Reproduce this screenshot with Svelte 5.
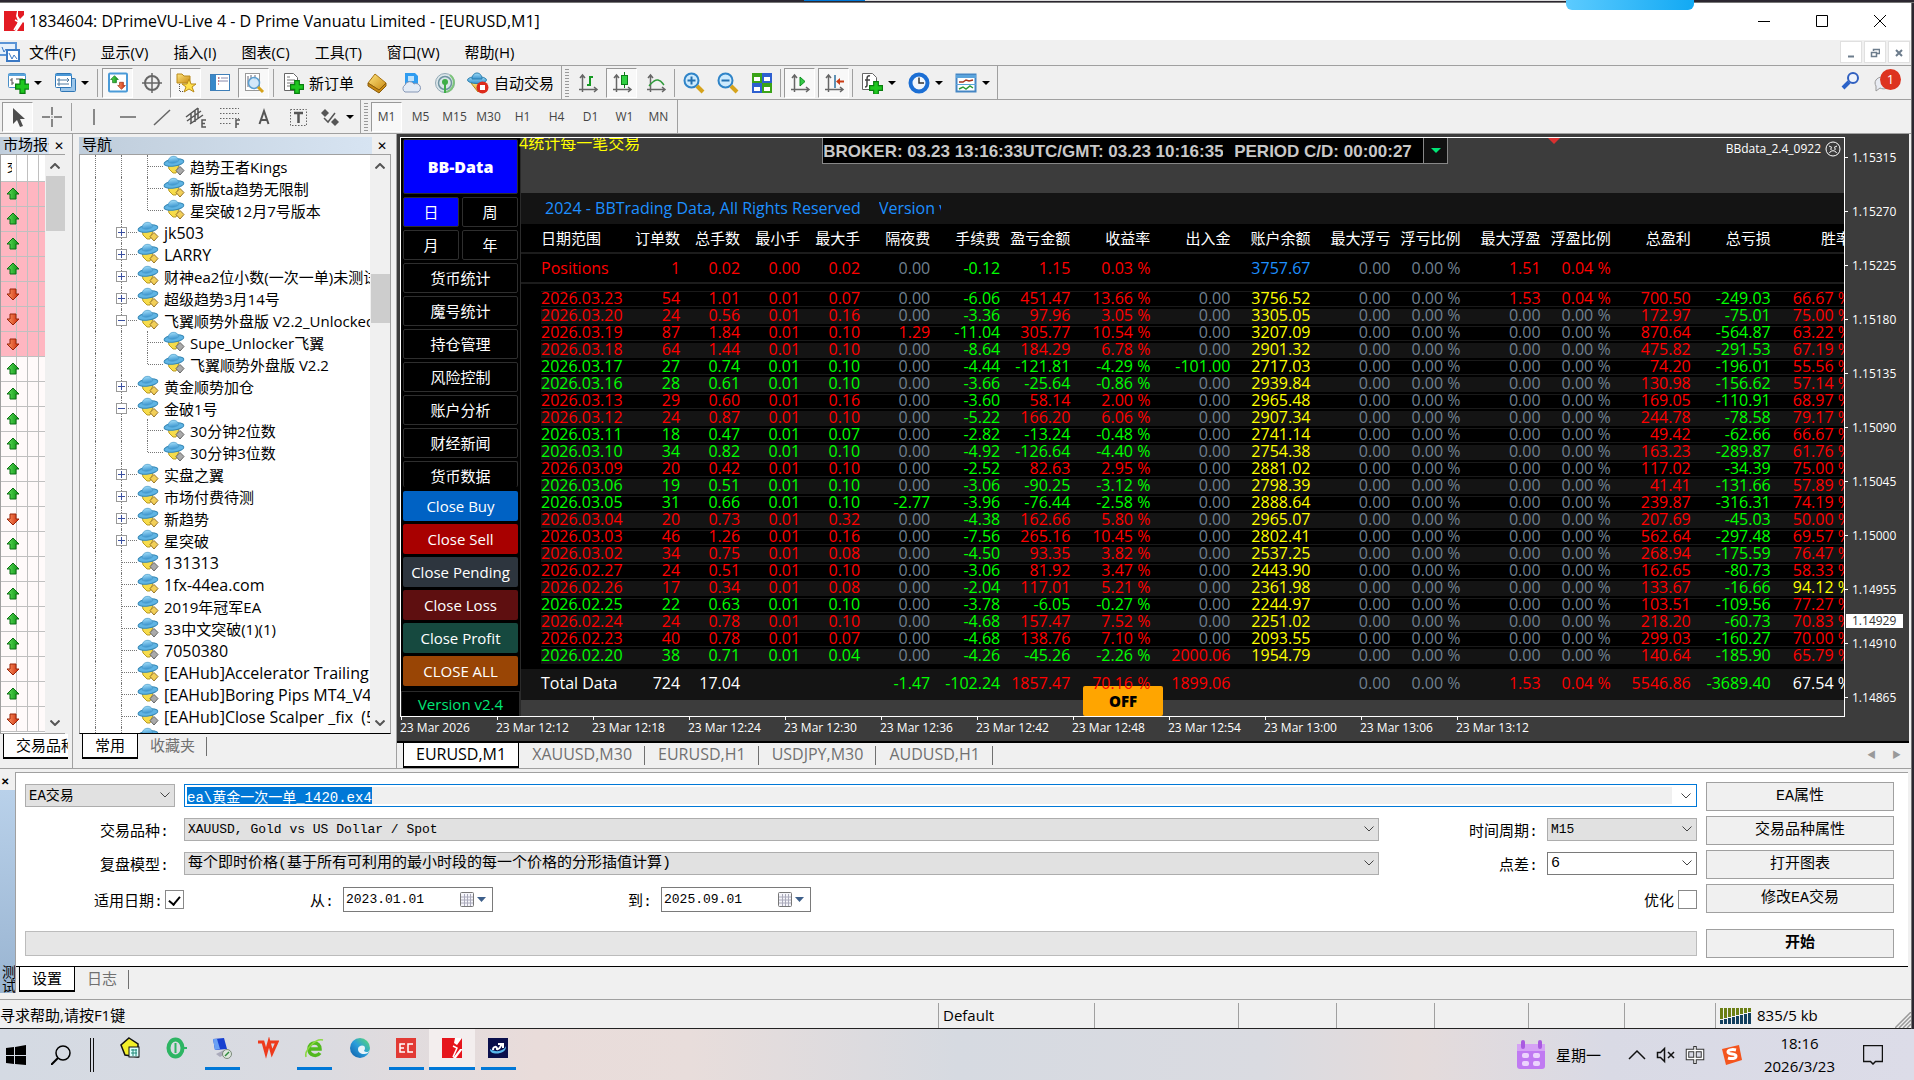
<script>
  import { onMount } from "svelte";

  const menu = ["文件(F)", "显示(V)", "插入(I)", "图表(C)", "工具(T)", "窗口(W)", "帮助(H)"];

  // first toolbar, "|" is a separator
  const tools = [
    { icon: "newchart", drop: true, label: "新图表" },
    { icon: "profiles", drop: true, label: "配置文件" },
    "|",
    { icon: "watch", on: true, label: "市场报价" },
    { icon: "target", label: "数据窗口" },
    { icon: "folder", on: true, label: "导航" },
    { icon: "terminal", label: "终端" },
    { icon: "tester", on: true, label: "测试" },
    "|",
    { icon: "order", text: "新订单" },
    { icon: "book", label: "编辑器" },
    { icon: "cloud", label: "VPS" },
    { icon: "signal", label: "信号" },
    { icon: "auto", text: "自动交易" }
  ];
  const chartTools = [
    { icon: "bars", label: "柱状图" },
    { icon: "candle", on: true, label: "蜡烛图" },
    { icon: "line", label: "折线图" },
    "|",
    { icon: "zoomin", label: "放大" },
    { icon: "zoomout", label: "缩小" },
    { icon: "tile", label: "平铺窗口" },
    "|",
    { icon: "scroll", on: true, label: "自动滚动" },
    { icon: "shift", on: true, label: "图表平移" },
    "|",
    { icon: "indicator", drop: true, label: "技术指标" },
    { icon: "clock", drop: true, label: "周期" },
    { icon: "template", drop: true, label: "模板" }
  ];
  const drawTools = [
    { icon: "cursor", on: true, label: "光标" },
    { icon: "cross", label: "十字准线" },
    "|",
    { icon: "vline", label: "垂直线" },
    { icon: "hline", label: "水平线" },
    { icon: "trend", label: "趋势线" },
    { icon: "channel", label: "通道" },
    { icon: "fibo", label: "斐波那契" },
    { icon: "texta", label: "文字" },
    { icon: "textt", label: "文字标签" },
    { icon: "arrows", drop: true, label: "箭头" }
  ];
  const periods = ["M1", "M5", "M15", "M30", "H1", "H4", "D1", "W1", "MN"];

  const quotes = "UUUUDDDUUUUUUDUUUUUDUD".split("");

  // box: + / - expander, off: grey diamond, last: last child of its parent
  const tree = [
    { lvl: 2, name: "趋势王者Kings", off: true },
    { lvl: 2, name: "新版ta趋势无限制" },
    { lvl: 2, name: "星突破12月7号版本", last: true },
    { lvl: 1, name: "jk503", box: "+" },
    { lvl: 1, name: "LARRY", box: "+" },
    { lvl: 1, name: "财神ea2位小数(一次一单)未测试", box: "+" },
    { lvl: 1, name: "超级趋势3月14号", box: "+" },
    { lvl: 1, name: "飞翼顺势外盘版 V2.2_Unlocked", box: "-" },
    { lvl: 2, name: "Supe_Unlocker飞翼", off: true },
    { lvl: 2, name: "飞翼顺势外盘版 V2.2", off: true, last: true },
    { lvl: 1, name: "黄金顺势加仓", box: "+" },
    { lvl: 1, name: "金破1号", box: "-" },
    { lvl: 2, name: "30分钟2位数", off: true },
    { lvl: 2, name: "30分钟3位数", off: true, last: true },
    { lvl: 1, name: "实盘之翼", box: "+" },
    { lvl: 1, name: "市场付费待测", box: "+" },
    { lvl: 1, name: "新趋势", box: "+" },
    { lvl: 1, name: "星突破", box: "+" },
    { lvl: 1, name: "131313", off: true },
    { lvl: 1, name: "1fx-44ea.com" },
    { lvl: 1, name: "2019年冠军EA" },
    { lvl: 1, name: "33中文突破(1)(1)", off: true },
    { lvl: 1, name: "7050380", off: true },
    { lvl: 1, name: "[EAHub]Accelerator Trailing" },
    { lvl: 1, name: "[EAHub]Boring Pips MT4_V4", off: true },
    { lvl: 1, name: "[EAHub]Close Scalper _fix  (5", off: true },
    { lvl: 1, name: "[EAHub]", off: true }
  ];
  const isLatin = (s) => /^[ -~]+$/.test(s);

  const pages = ["货币统计", "魔号统计", "持仓管理", "风险控制", "账户分析", "财经新闻", "货币数据"];
  const closers = [
    { name: "Close Buy", cls: "buy" },
    { name: "Close Sell", cls: "sell" },
    { name: "Close Pending", cls: "pending" },
    { name: "Close Loss", cls: "loss" },
    { name: "Close Profit", cls: "profit" },
    { name: "CLOSE ALL", cls: "all" }
  ];

  const widths = [79, 60, 60, 60, 60, 70, 70, 70, 80, 80, 80, 80, 70, 80, 70, 80, 80, 80];
  const heads = ["日期范围", "订单数", "总手数", "最小手", "最大手", "隔夜费", "手续费", "盈亏金额", "收益率", "出入金", "账户余额", "最大浮亏", "浮亏比例", "最大浮盈", "浮盈比例", "总盈利", "总亏损", "胜率"];

  // date, orders, lots, max lot, swap, commission, profit, rate, deposit, balance, gain, loss, win rate
  const days = [
    ["2026.03.23", "54", "1.01", "0.07", "0.00", "-6.06", "451.47", "13.66", "0.00", "3756.52", "700.50", "-249.03", "66.67"],
    ["2026.03.20", "24", "0.56", "0.16", "0.00", "-3.36", "97.96", "3.05", "0.00", "3305.05", "172.97", "-75.01", "75.00"],
    ["2026.03.19", "87", "1.84", "0.10", "1.29", "-11.04", "305.77", "10.54", "0.00", "3207.09", "870.64", "-564.87", "63.22"],
    ["2026.03.18", "64", "1.44", "0.10", "0.00", "-8.64", "184.29", "6.78", "0.00", "2901.32", "475.82", "-291.53", "67.19"],
    ["2026.03.17", "27", "0.74", "0.10", "0.00", "-4.44", "-121.81", "-4.29", "-101.00", "2717.03", "74.20", "-196.01", "55.56"],
    ["2026.03.16", "28", "0.61", "0.10", "0.00", "-3.66", "-25.64", "-0.86", "0.00", "2939.84", "130.98", "-156.62", "57.14"],
    ["2026.03.13", "29", "0.60", "0.16", "0.00", "-3.60", "58.14", "2.00", "0.00", "2965.48", "169.05", "-110.91", "68.97"],
    ["2026.03.12", "24", "0.87", "0.10", "0.00", "-5.22", "166.20", "6.06", "0.00", "2907.34", "244.78", "-78.58", "79.17"],
    ["2026.03.11", "18", "0.47", "0.07", "0.00", "-2.82", "-13.24", "-0.48", "0.00", "2741.14", "49.42", "-62.66", "66.67"],
    ["2026.03.10", "34", "0.82", "0.10", "0.00", "-4.92", "-126.64", "-4.40", "0.00", "2754.38", "163.23", "-289.87", "61.76"],
    ["2026.03.09", "20", "0.42", "0.10", "0.00", "-2.52", "82.63", "2.95", "0.00", "2881.02", "117.02", "-34.39", "75.00"],
    ["2026.03.06", "19", "0.51", "0.10", "0.00", "-3.06", "-90.25", "-3.12", "0.00", "2798.39", "41.41", "-131.66", "57.89"],
    ["2026.03.05", "31", "0.66", "0.10", "-2.77", "-3.96", "-76.44", "-2.58", "0.00", "2888.64", "239.87", "-316.31", "74.19"],
    ["2026.03.04", "20", "0.73", "0.32", "0.00", "-4.38", "162.66", "5.80", "0.00", "2965.07", "207.69", "-45.03", "50.00"],
    ["2026.03.03", "46", "1.26", "0.16", "0.00", "-7.56", "265.16", "10.45", "0.00", "2802.41", "562.64", "-297.48", "69.57"],
    ["2026.03.02", "34", "0.75", "0.08", "0.00", "-4.50", "93.35", "3.82", "0.00", "2537.25", "268.94", "-175.59", "76.47"],
    ["2026.02.27", "24", "0.51", "0.10", "0.00", "-3.06", "81.92", "3.47", "0.00", "2443.90", "162.65", "-80.73", "58.33"],
    ["2026.02.26", "17", "0.34", "0.08", "0.00", "-2.04", "117.01", "5.21", "0.00", "2361.98", "133.67", "-16.66", "94.12"],
    ["2026.02.25", "22", "0.63", "0.10", "0.00", "-3.78", "-6.05", "-0.27", "0.00", "2244.97", "103.51", "-109.56", "77.27"],
    ["2026.02.24", "24", "0.78", "0.10", "0.00", "-4.68", "157.47", "7.52", "0.00", "2251.02", "218.20", "-60.73", "70.83"],
    ["2026.02.23", "40", "0.78", "0.07", "0.00", "-4.68", "138.76", "7.10", "0.00", "2093.55", "299.03", "-160.27", "70.00"],
    ["2026.02.20", "38", "0.71", "0.04", "0.00", "-4.26", "-45.26", "-2.26", "2000.06", "1954.79", "140.64", "-185.90", "65.79"]
  ];

  const positions = ["Positions", "1", "0.02", "0.00", "0.02", "0.00", "-0.12", "1.15", "0.03 %", "", "3757.67", "0.00", "0.00 %", "1.51", "0.04 %", "", "", ""];
  const totals = ["Total Data", "724", "17.04", "", "", "-1.47", "-102.24", "1857.47", "70.16 %", "1899.06", "", "0.00", "0.00 %", "1.53", "0.04 %", "5546.86", "-3689.40", "67.54 %"];

  function expand(d, i) {
    const up = i === 0;
    return [d[0], d[1], d[2], "0.01", d[3], d[4], d[5], d[6], d[7] + " %", d[8], d[9], "0.00", "0.00 %", up ? "1.53" : "0.00", up ? "0.04 %" : "0.00 %", d[10], d[11], d[12] + " %"];
  }

  function tone(v) {
    const n = parseFloat(v);
    return n > 0 ? "red" : n < 0 ? "lime" : "grey";
  }

  function dayTone(row, c) {
    if (c < 5) return tone(row[7]);
    if (c === 10) return "yellow";
    if (c === 17) return parseFloat(row[c]) > 90 ? "yellow" : "red";
    return tone(row[c]);
  }

  const prices = ["1.15315", "1.15270", "1.15225", "1.15180", "1.15135", "1.15090", "1.15045", "1.15000", "1.14955", "1.14910", "1.14865"];
  const times = ["23 Mar 2026", "23 Mar 12:12", "23 Mar 12:18", "23 Mar 12:24", "23 Mar 12:30", "23 Mar 12:36", "23 Mar 12:42", "23 Mar 12:48", "23 Mar 12:54", "23 Mar 13:00", "23 Mar 13:06", "23 Mar 13:12"];
  const charts = ["EURUSD,M1", "XAUUSD,M30", "EURUSD,H1", "USDJPY,M30", "AUDUSD,H1"];

  const apps = [
    { icon: "a-note", label: "便签" },
    { icon: "a-green", label: "浏览器" },
    { icon: "a-remote", label: "远程桌面", run: true },
    { icon: "a-wps", label: "WPS" },
    { icon: "a-ie", label: "360", run: true },
    { icon: "a-edge", label: "Edge" },
    { icon: "a-ec", label: "EC", run: true },
    { icon: "a-prime", label: "D Prime", run: true, active: true },
    { icon: "a-navy", label: "MT4", run: true }
  ];

  let expert = "ea\\黄金一次一单_1420.ex4";
  let expertInput;

  onMount(() => {
    expertInput.focus({ preventScroll: true });
    expertInput.select();
  });
</script>

{#snippet ico(name)}
  <svg class="ico" viewBox="0 0 22 22" aria-hidden="true"><use href="#{name}" /></svg>
{/snippet}

{#snippet toolrow(items)}
  {#each items as t}
    {#if t === "|"}
      <span class="sep"></span>
    {:else}
      <button class="tool" class:on={t.on} class:drop={t.drop} class:wide={t.text} aria-label={t.label ?? t.text}>
        {@render ico(t.icon)}
        {#if t.text}<span>{t.text}</span>{/if}
        {#if t.drop}<i class="tri"></i>{/if}
      </button>
    {/if}
  {/each}
{/snippet}

{#snippet chev()}
  <svg class="chev" viewBox="0 0 10 6" aria-hidden="true"><path d="M.5.5 5 5 9.5.5" fill="none" stroke="#444" /></svg>
{/snippet}

{#snippet scrollbar(cls)}
  <div class="scrollbar {cls}">
    <svg viewBox="0 0 10 6"><path d="M.5 5.5 5 1l4.5 4.5" fill="none" stroke="#555" stroke-width="2" /></svg>
    <div class="thumb"></div>
    <svg viewBox="0 0 10 6"><path d="M.5.5 5 5 9.5.5" fill="none" stroke="#555" stroke-width="2" /></svg>
  </div>
{/snippet}

<svg class="defs" aria-hidden="true">
  <defs>
    <linearGradient id="gGreen" x1="0" x2="1"><stop offset="0" stop-color="#5fe05a" /><stop offset="1" stop-color="#0b8f14" /></linearGradient>
    <linearGradient id="gRed" x1="0" x2="1"><stop offset="0" stop-color="#ff9a66" /><stop offset="1" stop-color="#c92a0a" /></linearGradient>
    <linearGradient id="gBlue" x1="0" x2="0" y1="0" y2="1"><stop offset="0" stop-color="#9fdcf8" /><stop offset="1" stop-color="#3a94cf" /></linearGradient>
    <linearGradient id="gGold" x1="0" x2="1" y1="0" y2="1"><stop offset="0" stop-color="#ffe680" /><stop offset="1" stop-color="#c98a12" /></linearGradient>
    <linearGradient id="gEdge" x1="0" x2="1" y1="1" y2="0"><stop offset="0" stop-color="#0c59a4" /><stop offset=".5" stop-color="#2a9ddb" /><stop offset="1" stop-color="#5fe06a" /></linearGradient>
  </defs>
  <symbol id="plus" viewBox="0 0 12 12"><path d="M4 .5h4V4h3.5v4H8v3.5H4V8H.5V4H4z" fill="#1fc71f" stroke="#0a7d10" /></symbol>
  <symbol id="up" viewBox="0 0 14 14"><path d="M7 1l6 6H10v5H4V7H1z" fill="url(#gGreen)" stroke="#0d6e14" /></symbol>
  <symbol id="down" viewBox="0 0 14 14"><path d="M7 13l6-6H10V2H4v5H1z" fill="url(#gRed)" stroke="#9a2408" /></symbol>
  <symbol id="newchart" viewBox="0 0 22 22"><rect x="1.5" y="1.5" width="17" height="14" rx="1" fill="#fff" stroke="#4b8fc7" /><path d="M1 2h18v2H1z" fill="#5ba4dc" /><path d="M5 6v7M3 8h2m0 3h2M9 7h7" stroke="#555" /><use href="#plus" x="8" y="7" width="15" height="15" /></symbol>
  <symbol id="profiles" viewBox="0 0 22 22"><rect x="6.5" y="6.5" width="15" height="13" rx="1" fill="#9cc6ea" stroke="#2f76b5" /><rect x="1.5" y="1.5" width="16" height="14" rx="1" fill="#fff" stroke="#2f76b5" /><path d="M1 2h17v2H1z" fill="#4b98d6" /><path d="M5 6v8M3 8h12M3 12h12M13 6l2 2-2 2" fill="none" stroke="#4f7ba0" /></symbol>
  <symbol id="watch" viewBox="0 0 22 22"><rect x="2" y="1.5" width="18" height="18" rx="1" fill="#fff" stroke="#4b9bd8" stroke-width="2" /><use href="#up" x="3" y="3" width="9" height="9" /><use href="#down" x="10" y="9" width="9" height="9" /></symbol>
  <symbol id="target" viewBox="0 0 22 22"><circle cx="11" cy="11" r="7" fill="none" stroke="#666" stroke-width="2" /><path d="M11 1v20M1 11h20" stroke="#666" stroke-width="1.5" /></symbol>
  <symbol id="folder" viewBox="0 0 22 22"><path d="M2 2h5l2 2h6v7H2z" fill="url(#gGold)" stroke="#b98a1a" /><path d="M4.5 12v7M5 19.5h6" stroke="#555" stroke-dasharray="1 1" /><path d="M14 7l2 5h5l-4 3 2 5-5-3-5 3 2-5-4-3h5z" fill="#ffe04a" stroke="#b98a1a" /></symbol>
  <symbol id="terminal" viewBox="0 0 22 22"><rect x="1.5" y="2.5" width="19" height="16" fill="#fff" stroke="#3f7fb8" /><rect x="2" y="3" width="5" height="15" fill="#3a88c8" /><path d="M9 6h2m1 0h7M9 9h10" stroke="#88a" /><path d="M9 6h1m-1 3h1m-1 3h1" stroke="#c33" /></symbol>
  <symbol id="tester" viewBox="0 0 22 22"><rect x="2.5" y="1.5" width="14" height="17" fill="#fff" stroke="#999" /><path d="M5 4v11m3-12v5m4-5v5" stroke="#667" /><circle cx="11" cy="11" r="5.5" fill="#cfe6f8" fill-opacity=".9" stroke="#5c9fd0" stroke-width="1.5" /><path d="M15 15l5 5" stroke="#d6a31c" stroke-width="3" /></symbol>
  <symbol id="order" viewBox="0 0 22 22"><path d="M2.5 1.5h9l4 4v13h-13z" fill="#fff" stroke="#666" /><path d="M5 5h3M5 8h8M5 11h7M5 14h4" stroke="#777" /><use href="#plus" x="8" y="8" width="14" height="14" /></symbol>
  <symbol id="book" viewBox="0 0 22 22"><path d="M9 2l11 9-7 7L2 11z" fill="url(#gGold)" stroke="#a97413" /><path d="M2 11v3l11 7 7-7v-3l-7 7z" fill="#c98a12" stroke="#8a5c0c" /></symbol>
  <symbol id="cloud" viewBox="0 0 22 22"><path d="M5 1h10l3 3v9H5z" fill="#2f9cf0" /><path d="M8 4h6v5H8z" fill="#bfe2fb" /><path d="M5 20a4 4 0 010-7 5 5 0 019-1 4 4 0 014 8z" fill="#e4ebf5" stroke="#8596b5" /></symbol>
  <symbol id="signal" viewBox="0 0 22 22"><circle cx="11" cy="11" r="9.5" fill="#dbe6ea" stroke="#93a9b5" /><circle cx="11" cy="11" r="6.5" fill="none" stroke="#6f93a0" stroke-width="1.5" /><path d="M11 20a9.5 9.5 0 005-17" fill="none" stroke="#7cc47a" stroke-width="2" /><circle cx="11" cy="10" r="3" fill="#3fae49" /><path d="M11 11v10" stroke="#3fae49" stroke-width="2" /></symbol>
  <symbol id="auto" viewBox="0 0 22 22"><path d="M4 11l7 9 8-9z" fill="url(#gGold)" stroke="#b98a1a" /><ellipse cx="10" cy="8" rx="9.5" ry="3.5" fill="url(#gBlue)" stroke="#2c7fae" /><path d="M5 7c0-8 10-8 10 0z" fill="url(#gBlue)" stroke="#2c7fae" /><circle cx="15.5" cy="15.5" r="6" fill="#dd2b1c" /><rect x="13" y="13" width="5" height="5" fill="#fff" /></symbol>
  <symbol id="axes" viewBox="0 0 22 22"><path d="M5.5 3v17M2 17.5h18M3 6l2.5-3L8 6M17 15l3 2.5-3 2.5" fill="none" stroke="#666" stroke-width="1.5" /></symbol>
  <symbol id="bars" viewBox="0 0 22 22"><use href="#axes" /><path d="M13 4v10M13 5h3M10 13h3" stroke="#159a22" stroke-width="2" /></symbol>
  <symbol id="candle" viewBox="0 0 22 22"><use href="#axes" /><path d="M13.5 0v16" stroke="#0b7d18" /><rect x="10.5" y="3.5" width="6" height="9" fill="#2fd040" stroke="#0b7d18" /></symbol>
  <symbol id="line" viewBox="0 0 22 22"><use href="#axes" /><path d="M4 14c3-3 5-7 9-6s4 3 6 5" fill="none" stroke="#2f9a3a" stroke-width="1.5" /></symbol>
  <symbol id="lens" viewBox="0 0 22 22"><circle cx="8.5" cy="8.5" r="7" fill="#cdeafd" stroke="#2f84c8" stroke-width="2" /><path d="M14 14l6 6" stroke="#d6a31c" stroke-width="4" /></symbol>
  <symbol id="zoomin" viewBox="0 0 22 22"><use href="#lens" /><path d="M8.5 4.5v8M4.5 8.5h8" stroke="#2470b0" stroke-width="2" /></symbol>
  <symbol id="zoomout" viewBox="0 0 22 22"><use href="#lens" /><path d="M4.5 8.5h8" stroke="#2470b0" stroke-width="2" /></symbol>
  <symbol id="tile" viewBox="0 0 22 22"><path d="M1 1h10v10H1zM11 11h10v10H11z" fill="#3aa318" /><path d="M11 1h10v10H11zM1 11h10v10H1z" fill="#2d5fd0" /><path d="M3 5h6v4H3zM13 5h6v4h-6zM3 15h6v4H3zM13 15h6v4h-6z" fill="#fff" /></symbol>
  <symbol id="scroll" viewBox="0 0 22 22"><use href="#axes" /><path d="M11 5v9l5-4.5z" fill="#35c948" stroke="#0b8f1c" /></symbol>
  <symbol id="shift" viewBox="0 0 22 22"><use href="#axes" /><path d="M12 3v13" stroke="#2c6f9e" stroke-width="1.5" /><path d="M13 9.5l4-3.5v2.5h4v2h-4V13z" fill="#c93b14" /></symbol>
  <symbol id="indicator" viewBox="0 0 22 22"><path d="M1.5 1.5h10l4 4v12h-14z" fill="#fff" stroke="#666" /><path d="M9 4c-3-1-3 2-3 4v5c0 2-1 2-2 2M4 8h5" fill="none" stroke="#444" stroke-width="1.5" /><use href="#plus" x="8" y="9" width="14" height="14" /></symbol>
  <symbol id="clock" viewBox="0 0 22 22"><circle cx="11" cy="11" r="8.5" fill="#f3f8fd" stroke="#1c6fd4" stroke-width="4" /><path d="M11 5.5V11h5" fill="none" stroke="#333" stroke-width="1.5" /></symbol>
  <symbol id="template" viewBox="0 0 22 22"><rect x="1.5" y="2.5" width="19" height="17" fill="#fff" stroke="#4586c4" stroke-width="2" /><path d="M1 3h20v3H1zM1 12h20v1H1z" fill="#5ba4dc" /><path d="M4 10h4l3-2 3 1 4-1" fill="none" stroke="#a8331c" stroke-width="1.5" /><path d="M4 17l4-2 3 2 4-3 3 2" fill="none" stroke="#2f9a3a" stroke-width="1.5" /></symbol>
  <symbol id="cursor" viewBox="0 0 22 22"><path d="M6 2v16l4-4 3 7 3-1-3-7h5z" fill="#4d4d4d" /></symbol>
  <symbol id="cross" viewBox="0 0 22 22"><path d="M11 1v8m0 4v8M1 11h8m4 0h8M10.5 11h1" stroke="#666" stroke-width="1.5" /></symbol>
  <symbol id="vline" viewBox="0 0 22 22"><path d="M11 3v16" stroke="#666" stroke-width="1.5" /></symbol>
  <symbol id="hline" viewBox="0 0 22 22"><path d="M3 11h16" stroke="#666" stroke-width="1.5" /></symbol>
  <symbol id="trend" viewBox="0 0 22 22"><path d="M3 19L19 4" stroke="#666" stroke-width="1.5" /></symbol>
  <symbol id="channel" viewBox="0 0 22 22"><path d="M1 11L13 2M2 15L16 5M5 18L18 9M6 7v10M10 4v12M13 2v10" stroke="#555" stroke-width="1.5" /><path d="M21 14h-4v7h4m-4-3.5h3" fill="none" stroke="#555" stroke-width="1.5" /></symbol>
  <symbol id="fibo" viewBox="0 0 22 22"><path d="M1 2.5h19M1 7.5h19M1 12.5h19M1 17.5h12" stroke="#666" stroke-dasharray="1.5 1.5" /><path d="M21 14h-4v8m0-4h3" fill="none" stroke="#555" stroke-width="1.5" /></symbol>
  <symbol id="texta" viewBox="0 0 22 22"><path d="M6.5 18L11 5l4.5 13M8 14h6" fill="none" stroke="#555" stroke-width="2" /></symbol>
  <symbol id="textt" viewBox="0 0 22 22"><rect x="3.5" y="3.5" width="16" height="16" fill="none" stroke="#666" stroke-dasharray="1.5 1.5" /><path d="M7 7h9M11.5 7v10" stroke="#555" stroke-width="2.5" /></symbol>
  <symbol id="arrows" viewBox="0 0 22 22"><path d="M6 3l4 4-4 4-4-4zM16 12l4 4-4 4-4-4z" fill="#555" /><path d="M5 12l4 4 7-9" fill="none" stroke="#555" stroke-width="1.5" /></symbol>
  <symbol id="ea" viewBox="0 0 22 22">
    <path d="M5 9l1 5 4 4h3l3-8z" fill="#f7dc4a" stroke="#b99a25" />
    <g transform="rotate(-8 11 8)">
      <ellipse cx="11" cy="7.5" rx="10" ry="3.5" fill="#5fb4e4" stroke="#3486b5" />
      <path d="M5.5 6.5c0-7 10.5-7 10.5 0-3 2-7.5 2-10.5 0z" fill="url(#gBlue)" stroke="#4b9bc9" stroke-width=".7" />
    </g>
  </symbol>
  <symbol id="gold" viewBox="0 0 22 22"><path d="M17 11.5l4 4-4 4.5-4-4.5z" fill="#f2cf58" stroke="#98752a" /></symbol>
  <symbol id="dull" viewBox="0 0 22 22"><path d="M17 11.5l4 4-4 4.5-4-4.5z" fill="#aaa" stroke="#666" /></symbol>
  <symbol id="prime" viewBox="0 0 22 22"><path d="M1 1h13l-1 5 2 5-3 10H1z" fill="#e31b23" /><path d="M15 1h6v4l-4 4-2-3zM14 21l6-9 1 1v8z" fill="#e31b23" /><path d="M12 10l4 2-5 8" fill="none" stroke="#fff" stroke-width="1.5" /></symbol>
  <symbol id="a-note" viewBox="0 0 22 22"><path d="M10 1l9 6v13l-13-2-4-10z" fill="#f2ef28" stroke="#111" stroke-width="1.5" /><rect x="10" y="10" width="10" height="10" fill="#dff" stroke="#111" /><path d="M12 13h6M12 16h6M14 12v7M17 12v7" stroke="#287" /></symbol>
  <symbol id="a-green" viewBox="0 0 22 22"><ellipse cx="10.5" cy="11" rx="7" ry="8.5" fill="none" stroke="#2db563" stroke-width="4" /><path d="M10.5 6v10M17 11h5" stroke="#2db563" stroke-width="2" /></symbol>
  <symbol id="a-remote" viewBox="0 0 22 22"><path d="M2 2l11-1 3 11-12 1z" fill="#1740d0" /><path d="M2 2l4 0 3 10-5 1z" fill="#6aa0f4" /><path d="M5 17l8-4 3 3-7 4z" fill="#aab" /><circle cx="16" cy="17" r="4.5" fill="#dde6dd" stroke="#7a8a7a" /><path d="M14 19l4-4" stroke="#2a8a3a" stroke-width="1.5" /></symbol>
  <symbol id="a-wps" viewBox="0 0 22 22"><path d="M1 5h5l3 11 3-11 3 11 5-11h-9" fill="none" stroke="#ee3a1c" stroke-width="3" /></symbol>
  <symbol id="a-ie" viewBox="0 0 22 22"><path d="M5 12h12c0-8-11-8-11 0 0 7 8 8 11 4" fill="none" stroke="#52b91f" stroke-width="3.5" /><path d="M3 20C1 14 12 1 20 3" fill="none" stroke="#8bd940" stroke-width="1.5" /></symbol>
  <symbol id="a-edge" viewBox="0 0 22 22"><circle cx="11" cy="11" r="10" fill="url(#gEdge)" /><path d="M9 12c0-4 7-5 7-1 0 2-1 2-1 3 2 2 5 1 6-1-1 5-12 6-12-1z" fill="#e8f4fa" /></symbol>
  <symbol id="a-ec" viewBox="0 0 22 22"><path d="M1 1h20v20H1z" fill="#e23a34" /><path d="M10 7H5v8h5M5 11h4M18 7h-5v8h5" fill="none" stroke="#fff" stroke-width="1.5" /></symbol>
  <symbol id="a-prime" viewBox="0 0 22 22"><path d="M1 1h20v20H1z" fill="#e6151c" /><path d="M14 1l7 0-5 7-3-2zM12 21l7-9 2 0v1l-6 8z" fill="#fff" /><path d="M12 9l4 2-4 9" fill="none" stroke="#fff" stroke-width="1.5" /></symbol>
  <symbol id="a-navy" viewBox="0 0 22 22"><path d="M1 1h20v20H1z" fill="#0a0f4c" /><path d="M3 12c-1 7 17 6 16-3-2 5-10 7-16 3z" fill="#58b7ea" /><path d="M6 13c0-4 4-4 4-1 3 1 3-3 5-5m-4 0h5v4" fill="none" stroke="#fff" stroke-width="2" /></symbol>
</svg>

<div class="screen">
  <div class="desk"><span class="blue"></span><span class="pill"></span></div>

  <div class="window">
    <header class="title">
      {@render ico("prime")}
      <h1>1834604: DPrimeVU-Live 4 - D Prime Vanuatu Limited - [EURUSD,M1]</h1>
      <button aria-label="最小化"><svg viewBox="0 0 12 12"><path d="M0 6.5h12" stroke="#000" /></svg></button>
      <button aria-label="最大化"><svg viewBox="0 0 12 12"><path d="M.5.5h11v11H.5z" fill="none" stroke="#000" /></svg></button>
      <button aria-label="关闭"><svg viewBox="0 0 12 12"><path d="M0 0l12 12M12 0L0 12" stroke="#000" /></svg></button>
    </header>

    <nav class="menu">
      <svg class="mdi" viewBox="0 0 20 22" aria-hidden="true"><rect x="-2" y="2" width="18" height="12" fill="#e5f0fb" stroke="#5a94d6" stroke-width="2" /><path d="M2 6l2 5 2-3 2 3" fill="none" stroke="#3b79c4" /><rect x="7" y="9" width="12" height="11" fill="#fff" stroke="#3b79c4" stroke-width="2" /><path d="M9 12l3 6 2-4 3 4" fill="none" stroke="#3b79c4" /></svg>
      {#each menu as m}<button>{m}</button>{/each}
      <span class="grow"></span>
      <button class="small" aria-label="最小化图表"><svg viewBox="0 0 10 10"><path d="M2 8.5h6" stroke="#6c7c8c" stroke-width="2" /></svg></button>
      <button class="small" aria-label="还原图表"><svg viewBox="0 0 10 10"><path d="M3.5 3V1.5h6v4H7M1.5 4.5h5v4h-5z" fill="none" stroke="#6c7c8c" stroke-width="1.5" /></svg></button>
      <button class="small" aria-label="关闭图表"><svg viewBox="0 0 10 10"><path d="M2 2l6 6M8 2L2 8" stroke="#6c7c8c" stroke-width="2" /></svg></button>
    </nav>

    <div class="bar">
      <div class="group">{@render toolrow(tools)}</div>
      <div class="group charts"><span class="grip"></span>{@render toolrow(chartTools)}</div>
      <span class="grow"></span>
      <button class="tool search" aria-label="搜索"><svg class="ico" viewBox="0 0 22 22"><circle cx="13" cy="8" r="5" fill="#eef3fc" stroke="#3060c0" stroke-width="2" /><path d="M9 12l-6 6" stroke="#2b62c8" stroke-width="4" /></svg></button>
      <button class="chat" aria-label="消息">
        <svg viewBox="0 0 18 18"><path d="M9 2a7 6 0 00-6 9l0 5 4-3a7 6 0 1 0 2-11z" fill="#e8ebf2" stroke="#999" /></svg>
        <b>1</b>
      </button>
    </div>

    <div class="bar second">
      <div class="group">{@render toolrow(drawTools)}</div>
      <div class="group periods">
        <span class="grip"></span>
        {#each periods as p, i}<button class="tool" class:on={i === 0}>{p}</button>{/each}
      </div>
    </div>

    <main>
      <section class="pane market">
        <div class="phead"><h2>市场报价</h2><button aria-label="关闭">✕</button></div>
        <div class="pbody">
          <div class="quotes">
            <div class="qrow qhead"><span><em>交</em></span><span></span><span></span><span></span></div>
            {#each quotes as q, i}
              <div class="qrow" class:pink={i < 7}>
                <span><svg viewBox="0 0 14 14"><use href={q === "U" ? "#up" : "#down"} /></svg></span><span></span><span></span><span></span>
              </div>
            {/each}
          </div>
          {@render scrollbar("high")}
        </div>
        <div class="tabs"><button class="active">交易品种</button></div>
      </section>

      <section class="pane navi">
        <div class="phead"><h2>导航</h2><button aria-label="关闭">✕</button></div>
        <div class="pbody">
          <ul class="tree">
            {#each tree as n}
              <li>
                <i class="g0"></i><i class="g1"></i>
                {#if n.lvl === 2}<i class="g2" class:half={n.last}></i>{/if}
                {#if n.box}<span class="box" class:open={n.box === "-"}></span>{/if}
                <i class="elbow"></i>
                <svg class="ico" viewBox="0 0 22 22"><use href="#ea" /><use href={n.off ? "#dull" : "#gold"} /></svg>
                <span class="name" class:latin={isLatin(n.name)}>{n.name}</span>
              </li>
            {/each}
          </ul>
          {@render scrollbar("mid")}
        </div>
        <div class="tabs"><button class="active">常用</button><button>收藏夹</button></div>
      </section>

      <section class="work">
        <div class="chart">
          <div class="plot">
            <aside>
              <button class="brand">BB-Data</button>
              <div class="ranges">
                <button class="cur">日</button><button>周</button><button>月</button><button>年</button>
              </div>
              {#each pages as p}<button class="page">{p}</button>{/each}
              <div class="closers">
                {#each closers as c}<button class={c.cls}>{c.name}</button>{/each}
              </div>
              <p class="ver">Version v2.4</p>
            </aside>

            <div class="stats">
              <p class="note">4统计每一笔交易</p>
              <div class="timebar">
                <span class="rt">BROKER: 03.23 13:16:33</span>
                <span class="rt">UTC/GMT: 03.23 10:16:35</span>
                <span class="per">PERIOD C/D: 00:00:27</span>
                <button aria-label="展开"><i class="tri"></i></button>
              </div>
              <i class="mark"></i>
              <p class="ealabel">BBdata_2.4_0922
                <svg viewBox="0 0 16 16"><circle cx="8" cy="8" r="7" fill="none" stroke="#fff" /><path d="M4.5 12c1-3 6-3 7 0M4 5l3 1.500M12 5L9 6.500M5 8h2m2 0h2" fill="none" stroke="#fff" /></svg>
              </p>
              <div class="copy"><span>2024 - BBTrading Data, All Rights Reserved</span><span class="cut">Version v2.4</span></div>
              <div class="sheet">
                <table>
                  <colgroup>{#each widths as w}<col style="width: {w}px" />{/each}</colgroup>
                  <thead><tr>{#each heads as h}<th>{h}</th>{/each}</tr></thead>
                  <tbody>
                    <tr class="pos">
                      {#each positions as v, c}<td class={c < 5 ? "red" : c === 10 ? "sky" : tone(v)}>{v}</td>{/each}
                    </tr>
                    <tr class="gap"><td colspan="18"></td></tr>
                    {#each days.map(expand) as row}
                      <tr class="day">{#each row as v, c}<td class={dayTone(row, c)}>{v}</td>{/each}</tr>
                    {/each}
                  </tbody>
                  <tfoot>
                    <tr>{#each totals as v, c}<td class={c < 3 || c === 17 ? "white" : tone(v)}><span>{v}</span></td>{/each}</tr>
                  </tfoot>
                </table>
              </div>
              <button class="off">OFF</button>
            </div>
          </div>

          <div class="scale">
            {#each prices as p}<span>{p}</span>{/each}
            <b>1.14929</b>
          </div>
          <div class="times">{#each times as t}<span>{t}</span>{/each}</div>
        </div>

        <div class="tabs charttabs">
          {#each charts as c, i}<button class:active={i === 0}>{c}</button>{/each}
          <span class="grow"></span>
          <button class="arrow" aria-label="向左">◀</button><button class="arrow" aria-label="向右">▶</button>
        </div>
      </section>
    </main>

    <section class="tester">
      <div class="spine"><button aria-label="关闭">✕</button><span>测试</span></div>
      <div class="tbody">
        <form class="settings" onsubmit={(e) => e.preventDefault()}>
          <div class="fields">
            <div class="line">
              <span class="combo kind"><select aria-label="类型"><option>EA交易</option></select>{@render chev()}</span>
              <span class="combo focus"><input aria-label="EA" spellcheck="false" bind:this={expertInput} bind:value={expert} />{@render chev()}</span>
            </div>
            <div class="line">
              <label class="lead" for="symbol">交易品种:</label>
              <span class="combo mono"><select id="symbol"><option>XAUUSD, Gold vs US Dollar / Spot</option></select>{@render chev()}</span>
              <label class="side" for="period">时间周期:</label>
              <span class="combo short mono"><select id="period"><option>M15</option></select>{@render chev()}</span>
            </div>
            <div class="line">
              <label class="lead" for="model">复盘模型:</label>
              <span class="combo"><select id="model"><option>每个即时价格(基于所有可利用的最小时段的每一个价格的分形插值计算)</option></select>{@render chev()}</span>
              <label class="side" for="spread">点差:</label>
              <span class="combo short plain"><input id="spread" value="6" />{@render chev()}</span>
            </div>
            <div class="line dates">
              <label class="lead" for="usedate">适用日期:</label>
              <input id="usedate" type="checkbox" checked />
              {#each [["从:", "from", "2023.01.01"], ["到:", "to", "2025.09.01"]] as [l, id, v]}
                <label class="dlabel" for={id}>{l}</label>
                <span class="date">
                  <input {id} value={v} />
                  <svg viewBox="0 0 28 18" aria-hidden="true"><rect x="1.5" y="1.5" width="13" height="14" rx="1" fill="#f5f5fa" stroke="#777" /><path d="M2 6h12M2 9h12M2 12h12M5.5 3v12M8.5 3v12M11.5 3v12" stroke="#aab" /><path d="M18 6h9l-4.5 5z" fill="#3d5f8a" /></svg>
                </span>
              {/each}
              <span class="grow"></span>
              <label for="opt">优化</label>
              <input id="opt" type="checkbox" />
            </div>
            <div class="progress"></div>
          </div>
          <div class="actions">
            <button>EA属性</button>
            <button>交易品种属性</button>
            <button>打开图表</button>
            <button>修改EA交易</button>
            <button class="start">开始</button>
          </div>
        </form>
        <div class="tabs"><button class="active">设置</button><button>日志</button></div>
      </div>
    </section>

    <footer class="status">
      <span class="help">寻求帮助,请按F1键</span>
      <span>Default</span>
      <span></span><span></span><span></span><span></span><span></span><span></span>
      <span class="net">
        <svg viewBox="0 0 32 16" aria-hidden="true">
          {#each [0, 1, 2, 3, 4, 5, 6, 7] as i}
            <rect x={i * 4} y="0" width="3" height={11 - i} fill="#6b7f14" />
            <rect x={i * 4} y={12 - i} width="3" height={4 + i} fill="#123f5e" />
          {/each}
        </svg>
        835/5 kb
      </span>
      <svg class="size" viewBox="0 0 16 16" aria-hidden="true"><path d="M0 16L16 0M4 16L16 4M8 16l8-8M12 16l4-4" stroke="#999" stroke-width="1.5" /></svg>
    </footer>
  </div>

  <footer class="taskbar">
    <button class="win" aria-label="开始"><svg viewBox="0 0 20 20"><path d="M0 3l8-1v8H0zM9 2l11-2v10H9zM0 11h8v8l-8-1zM9 11h11v9L9 19z" fill="#000" /></svg></button>
    <button class="find" aria-label="搜索"><svg viewBox="0 0 20 20"><circle cx="12" cy="8" r="7" fill="none" stroke="#000" stroke-width="1.5" /><path d="M7 13l-7 7" stroke="#000" stroke-width="2" /></svg></button>
    <span class="bars"></span>
    {#each apps as a}
      <button class="app" class:run={a.run} class:active={a.active} aria-label={a.label}>{@render ico(a.icon)}</button>
    {/each}
    <span class="grow"></span>
    <svg class="cal" viewBox="0 0 30 30" aria-hidden="true"><rect x="1" y="4" width="28" height="25" rx="3" fill="#c07af2" /><rect x="1" y="4" width="28" height="7" fill="#d5a2f5" /><path d="M7 2v5M24 2v5" stroke="#a95be0" stroke-width="4" stroke-linecap="round" /><g fill="#ecd4fd"><rect x="6" y="13" width="7" height="5" rx="2" /><rect x="17" y="13" width="7" height="5" rx="2" /><rect x="6" y="21" width="7" height="5" rx="2" /><rect x="17" y="21" width="7" height="5" rx="2" /></g></svg>
    <span class="week">星期一</span>
    <svg class="tray" viewBox="0 0 20 20"><path d="M2 14l8-8 8 8" fill="none" stroke="#111" stroke-width="1.5" /></svg>
    <svg class="tray" viewBox="0 0 20 20"><path d="M1.5 7.5h3l4-4v13l-4-4h-3zM12 7l6 6M18 7l-6 6" fill="none" stroke="#111" stroke-width="1.5" /></svg>
    <svg class="tray" viewBox="0 0 20 20"><path d="M2.5 5.5h15v8h-15zM10 1v18" fill="none" stroke="#333" stroke-width="3.5" /><path d="M2.5 5.5h15v8h-15zM10 2v16" fill="none" stroke="#fff" stroke-width="1.5" /></svg>
    <svg class="tray sogou" viewBox="0 0 20 20"><path d="M0 4l17-4 3 15-16 5z" fill="#f4551e" /><path d="M14 5c-4-1-8 0-8 2 0 3 8 1 8 4s-5 3-8 2" fill="none" stroke="#fff" stroke-width="3" /></svg>
    <div class="time"><span>18:16</span><span>2026/3/23</span></div>
    <svg class="notice" viewBox="0 0 20 20"><path d="M.5.5h19v16h-7L10 19l-2.5-2.5h-7z" fill="none" stroke="#111" stroke-width="1.5" /></svg>
  </footer>
</div>

<style>
  :global(body) {
    margin: 0;
    font-family: "Open Sans", "Noto Sans CJK SC", sans-serif;
    font-size: 15px;
    color: #000;
  }
  .defs {
    position: absolute;
    width: 0;
    height: 0;
  }
  .screen, .screen * {
    box-sizing: border-box;
  }
  .screen {
    height: 100vh;
    display: flex;
    flex-direction: column;
    overflow: hidden;
    background: #2b2730;
  }
  button {
    font: inherit;
    color: inherit;
    background: none;
    border: 0;
    padding: 0;
    white-space: nowrap;
  }
  input, select {
    font: inherit;
    color: inherit;
    margin: 0;
  }
  h1, h2, p, ul {
    margin: 0;
    padding: 0;
    font-size: inherit;
    font-weight: 400;
    list-style: none;
  }
  .grow {
    flex: 1;
  }
  .ico {
    width: 22px;
    height: 22px;
    flex: none;
  }
  .tri {
    border: 4px solid transparent;
    border-top-color: #000;
    border-bottom: 0;
  }

  .desk {
    position: relative;
    height: 3px;
    flex: none;
    border-bottom: 1px solid #777;
  }
  .desk .blue {
    position: absolute;
    left: 42%;
    right: 18%;
    height: 1px;
    background: linear-gradient(90deg, #0078d7 8%, #ddd 8%);
  }
  .desk .pill {
    position: absolute;
    right: 220px;
    top: 0;
    z-index: 2;
    width: 128px;
    height: 10px;
    border-radius: 0 0 6px 6px;
    background: linear-gradient(90deg, #5ccbff, #12a9f3);
  }
  .window {
    flex: 1;
    min-height: 0;
    display: flex;
    flex-direction: column;
    margin-right: 2px;
    background: #f0f0f0;
    border-right: 1px solid #777;
    border-bottom: 1px solid #222;
  }
  .title {
    height: 37px;
    flex: none;
    display: flex;
    align-items: center;
    padding: 0 2px 1px 3px;
    background: #fff;
  }
  .title h1 {
    flex: 1;
    margin-left: 4px;
    font-size: 16px;
  }
  .title button {
    width: 58px;
  }
  .title svg:not(.ico) {
    width: 12px;
    height: 12px;
  }
  .menu {
    height: 26px;
    flex: none;
    display: flex;
    align-items: center;
    gap: 1px;
    padding-bottom: 2px;
    border-bottom: 1px solid #a0a0a0;
  }
  .menu .mdi {
    width: 20px;
    height: 22px;
    margin-right: -4px;
  }
  .menu button {
    padding: 0 12px;
  }
  .menu .small {
    width: 22px;
    height: 22px;
    padding: 0;
    margin-right: 1px;
    background: #fff;
    border: 1px solid #e0e0e0;
  }
  .small svg {
    width: 10px;
    height: 10px;
  }

  .bar {
    height: 34px;
    flex: none;
    display: flex;
    border-bottom: 1px solid #a0a0a0;
  }
  .bar:not(.second) {
    padding-right: 6px;
  }
  .group {
    display: flex;
    align-items: center;
    gap: 3px;
    padding: 0 3px 0 2px;
    border-right: 1px solid #a0a0a0;
  }
  .group.charts, .group.periods {
    padding-left: 3px;
  }
  .grip {
    width: 4px;
    height: 28px;
    background: repeating-linear-gradient(#999 0 1px, #f0f0f0 1px 3px);
  }
  .sep {
    width: 1px;
    height: 28px;
    margin: 0 1px;
    background: #a0a0a0;
  }
  .charts .sep {
    margin: 0;
  }
  .second .sep {
    margin-right: 3px;
  }
  .tool {
    width: 31px;
    height: 30px;
    display: flex;
    align-items: center;
    justify-content: center;
    gap: 5px;
  }
  .tool.drop {
    width: 44px;
  }
  .second .tool.drop {
    width: 41px;
  }
  .tool.wide {
    width: auto;
    padding: 0 4px;
  }
  .tool.on {
    background: #f8f8f8;
    border: 1px solid #999;
    border-right-color: #fff;
    border-bottom-color: #fff;
  }
  .periods .tool {
    font-size: 12px;
    color: #444;
  }
  .search {
    margin-right: 5px;
  }
  .chat {
    position: relative;
    width: 34px;
  }
  .chat svg {
    width: 18px;
    height: 18px;
    margin: 6px 12px 0 0;
  }
  .chat b {
    position: absolute;
    top: 3px;
    right: 4px;
    width: 21px;
    height: 21px;
    border-radius: 50%;
    line-height: 20px;
    font-size: 13px;
    font-weight: 400;
    color: #fff;
    background: #dd3320;
  }

  main {
    flex: 1;
    min-height: 0;
    display: flex;
    border-bottom: 1px solid #a0a0a0;
  }
  .pane {
    flex: none;
    display: flex;
    flex-direction: column;
    padding-top: 3px;
    padding-bottom: 8px;
    border-right: 1px solid #a0a0a0;
  }
  .market {
    width: 73px;
    padding-right: 4px;
  }
  .navi {
    width: 324px;
    padding-left: 6px;
    padding-right: 5px;
  }
  .phead {
    height: 17px;
    flex: none;
    display: flex;
  }
  .phead h2 {
    flex: 1;
    overflow: hidden;
    white-space: nowrap;
    line-height: 15px;
    padding-left: 3px;
    background: linear-gradient(90deg, #bfcddb, #d7e4f2);
  }
  .phead button {
    width: 19px;
    font-size: 12px;
    line-height: 15px;
  }
  .pbody {
    flex: 1;
    min-height: 0;
    display: flex;
    border: 1px solid #a0a0a0;
    border-bottom-color: #000;
    background: #fff;
    overflow: hidden;
  }
  .market .pbody {
    margin-right: 3px;
    border-bottom-color: #a0a0a0;
    border-right: 0;
  }
  .quotes {
    flex: 1;
    overflow: hidden;
  }
  .qrow {
    display: grid;
    grid-template-columns: 16px 11px 11px 1fr;
    height: 25px;
    background: #fffafa;
  }
  .qrow span {
    border-right: 1px solid #c0c0c0;
    border-bottom: 1px solid #c0c0c0;
  }
  .qrow span:last-child {
    border-right: 0;
  }
  .qrow.pink {
    background: #ffb6c1;
  }
  .qrow.qhead {
    height: 27px;
    background: #fff;
  }
  .qrow em {
    display: block;
    width: 5px;
    margin-left: 6px;
    overflow: hidden;
    font-style: normal;
    font-size: 12px;
    line-height: 26px;
  }
  .qrow svg {
    position: relative;
    display: block;
    width: 14px;
    height: 14px;
    margin: 5px 0 0 5px;
  }
  .scrollbar {
    width: 20px;
    flex: none;
    display: flex;
    flex-direction: column;
    align-items: center;
    background: #f0f0f0;
    padding: 8px 0 7px;
  }
  .scrollbar svg {
    width: 10px;
    height: 6px;
    flex: none;
  }
  .thumb {
    width: 19px;
    background: #cdcdcd;
    margin-bottom: auto;
  }
  .high .thumb {
    height: 55px;
    margin-top: 7px;
  }
  .mid .thumb {
    height: 49px;
    margin-top: 105px;
  }

  .tree {
    flex: 1;
    overflow: hidden;
  }
  .tree li {
    display: flex;
    align-items: center;
    height: 22px;
    white-space: pre;
  }
  .tree i {
    flex: none;
  }
  .g0, .g1, .g2 {
    height: 22px;
    border-right: 1px dotted #777;
  }
  .g0 {
    width: 16px;
  }
  .g1, .g2 {
    width: 26px;
  }
  .g2.half {
    height: 11px;
    align-self: flex-start;
  }
  .elbow {
    width: 15px;
    border-top: 1px dotted #777;
  }
  .box {
    position: relative;
    width: 11px;
    height: 11px;
    flex: none;
    margin: 0 -5px 0 -6px;
    border: 1px solid #999;
    background: linear-gradient(#3a4fa0, #3a4fa0) center / 7px 1px no-repeat, linear-gradient(#3a4fa0, #3a4fa0) center / 1px 7px no-repeat, #fff;
  }
  .box.open {
    background: linear-gradient(#3a4fa0, #3a4fa0) center / 7px 1px no-repeat, #fff;
  }
  .name {
    margin-left: 5px;
  }
  .latin {
    padding-top: 2px;
    font-size: 16px;
  }

  .tabs {
    height: 26px;
    flex: none;
    display: flex;
    align-items: flex-start;
    padding-left: 3px;
    overflow: hidden;
    color: #707070;
  }
  .tabs button {
    position: relative;
    line-height: 23px;
    padding: 0 12px;
  }
  .tabs button:not(.active)::after {
    content: "";
    position: absolute;
    right: 0;
    top: 3px;
    height: 19px;
    border-right: 1px solid #707070;
  }
  .tabs .active {
    margin-top: -1px;
    background: #fff;
    color: #000;
    border: 1px solid #000;
    border-top-color: #fff;
    border-bottom-width: 2px;
  }

  .work {
    flex: 1;
    min-width: 0;
    display: flex;
    flex-direction: column;
    padding: 0 2px 0 0;
  }
  .chart {
    flex: 1;
    min-height: 0;
    display: grid;
    grid-template-columns: 1fr 64px;
    grid-template-rows: 1fr 24px;
    padding-top: 3px;
    padding-left: 3px;
    background: #3c3c3c;
    color: #fff;
  }
  .plot {
    min-width: 0;
    min-height: 0;
    display: flex;
    border: 1px solid #fff;
    overflow: hidden;
  }
  aside {
    width: 120px;
    flex: none;
    display: flex;
    flex-direction: column;
    gap: 3px;
    padding: 1px 2px 0;
    background: #000;
    border-right: 1px solid #2a2a2a;
  }
  aside button {
    flex: none;
    height: 30px;
    border: 1px solid #2e2e2e;
    border-radius: 2px;
    line-height: 28px;
  }
  aside .brand {
    height: 55px;
    font-weight: 800;
    font-size: 16px;
    background: #00f;
  }
  .ranges {
    display: grid;
    grid-template-columns: 1fr 1fr;
    gap: 3px;
  }
  .ranges .cur {
    background: #00f;
  }
  .page:last-of-type {
    height: 26px;
    border-bottom: 0;
  }
  .closers {
    display: flex;
    flex-direction: column;
    gap: 3px;
    margin-top: 1px;
  }
  .closers button {
    border: 0;
    line-height: 30px;
  }
  .buy { background: #0062c4; }
  .sell { background: #a80000; }
  .pending { background: #2d353e; }
  .loss { background: #5e0f10; }
  .profit { background: #16493f; }
  .all { background: #994505; }
  .ver {
    margin: 2px -2px 0;
    border: 1px solid #2a2a2a;
    text-align: center;
    line-height: 24px;
    color: #00e676;
  }

  .stats {
    position: relative;
    flex: 1;
    min-width: 0;
    padding-top: 55px;
  }
  .note {
    position: absolute;
    left: -2px;
    top: -6px;
    font-size: 16px;
    line-height: 22px;
    color: #ff0;
  }
  .timebar {
    position: absolute;
    left: 301px;
    top: -1px;
    height: 27px;
    display: flex;
    border: 1px solid #888;
    background: #000;
    font: bold 17px/27px "Liberation Sans", sans-serif;
    color: #c8c8c8;
  }
  .timebar .rt {
    width: 200px;
    overflow: hidden;
    display: flex;
    justify-content: center;
    white-space: nowrap;
  }
  .timebar .per {
    width: 200px;
    text-align: center;
  }
  .timebar button {
    width: 24px;
    border-left: 1px solid #888;
    background: #111;
    display: flex;
    align-items: center;
    justify-content: center;
  }
  .timebar .tri {
    border-width: 5px;
    border-bottom: 0;
    border-top-color: #00e676;
  }
  .mark {
    position: absolute;
    right: 284px;
    top: 0;
    border: 6px solid transparent;
    border-top-color: #d83030;
    border-bottom: 0;
  }
  .ealabel {
    position: absolute;
    right: 3px;
    top: 2px;
    display: flex;
    align-items: center;
    gap: 4px;
    font-size: 12px;
  }
  .ealabel svg {
    width: 16px;
    height: 16px;
  }
  .copy {
    height: 31px;
    display: flex;
    gap: 18px;
    padding-left: 24px;
    font-size: 16px;
    line-height: 30px;
    white-space: nowrap;
    background: #141414;
    color: #1e90ff;
  }
  .copy .cut {
    width: 62px;
    overflow: hidden;
  }
  .sheet {
    overflow: hidden;
    padding-left: 20px;
    background: linear-gradient(#000 28px, #1c1c1c 28px 30px, #000 30px 58px, #1c1c1c 58px 60px, #000 60px 445px, #141414 445px);
  }
  table {
    width: 1310px;
    table-layout: fixed;
    border-collapse: collapse;
    white-space: nowrap;
  }
  th, td {
    padding: 0;
    text-align: right;
    font-weight: 400;
  }
  td {
    font-size: 16px;
  }
  th:first-child, td:first-child {
    text-align: left;
  }
  thead tr, .pos {
    height: 30px;
  }
  thead th, .pos td {
    line-height: 28px;
    padding-bottom: 2px;
  }
  .gap td {
    height: 7px;
    line-height: 7px;
  }
  .day td {
    height: 17px;
    line-height: 13px;
    padding-bottom: 2px;
    border-bottom: 2px solid #000;
  }
  .day:nth-child(even) td {
    background: #141414;
  }
  .day:nth-child(odd) td {
    box-shadow: inset 0 1px #1a1a1a, inset 0 -1px #1a1a1a;
  }
  tfoot td {
    height: 35px;
    line-height: 24px;
  }
  tfoot span {
    position: relative;
    z-index: 2;
  }
  .red { color: #f00; }
  .lime { color: #0f0; }
  .grey { color: #708090; }
  .yellow { color: #ff0; }
  .sky { color: #1e90ff; }
  .white { color: #fff; }
  .off {
    position: absolute;
    left: 562px;
    bottom: 0;
    z-index: 1;
    width: 80px;
    height: 30px;
    border-radius: 2px;
    background: #ffa500;
    color: #000;
    font-weight: 800;
  }
  .scale {
    position: relative;
    padding-top: 14px;
    font-size: 12px;
    line-height: 14px;
    overflow: hidden;
  }
  .scale span {
    display: block;
    height: 54px;
  }
  .scale span::before {
    content: "";
    display: inline-block;
    width: 3px;
    height: 1px;
    margin-right: 4px;
    vertical-align: 4px;
    background: #fff;
  }
  .scale b {
    position: absolute;
    left: 1px;
    top: 477px;
    width: 57px;
    padding-left: 6px;
    font-weight: 400;
    background: #fff;
    color: #333;
  }
  .times {
    grid-column: 1 / 3;
    display: flex;
    font-size: 12px;
    line-height: 16px;
    white-space: nowrap;
    overflow: hidden;
  }
  .times span {
    width: 96px;
    flex: none;
  }
  .times span::before {
    content: "";
    display: block;
    width: 1px;
    height: 3px;
    margin-left: 1px;
    background: #fff;
  }
  .charttabs {
    height: 27px;
    border-top: 2px solid #000;
    padding-left: 6px;
    font-size: 16px;
  }
  .charttabs button {
    padding: 0 13px;
  }
  .charttabs .active {
    padding: 0 12px;
  }
  .charttabs .arrow {
    font-size: 9px;
    width: 25px;
    padding: 0;
    color: #999;
  }
  .charttabs .arrow::after {
    display: none;
  }

  .tester {
    flex: none;
    display: flex;
    padding: 3px 3px 6px 0;
  }
  .spine {
    width: 15px;
    flex: none;
    display: flex;
    flex-direction: column;
    font-size: 14px;
    overflow: hidden;
  }
  .spine button {
    height: 18px;
    width: 10px;
    font-size: 10px;
    font-weight: 700;
  }
  .spine span {
    flex: 1;
    writing-mode: vertical-rl;
    text-align: right;
    line-height: 14px;
    background: linear-gradient(#b9d1ea, #99b4d1);
  }
  .tbody {
    flex: 1;
    min-width: 0;
    border-left: 1px solid #a0a0a0;
    border-top: 1px solid #a0a0a0;
  }
  .settings {
    display: flex;
    gap: 9px;
    padding: 9px 14px 8px 9px;
    background: #fff;
    border-bottom: 1px solid #000;
    font-family: "Liberation Mono", "Noto Sans CJK SC", monospace;
  }
  .fields {
    flex: 1;
    min-width: 0;
    display: flex;
    flex-direction: column;
    gap: 11px;
    padding-top: 2px;
  }
  .line {
    display: flex;
    align-items: center;
    height: 23px;
  }
  .lead {
    width: 144px;
    margin-right: 15px;
    text-align: right;
  }
  .combo {
    position: relative;
    flex: 1;
    height: 23px;
  }
  .combo select, .combo input {
    appearance: none;
    display: block;
    width: 100%;
    height: 23px;
    padding: 0 3px;
    border: 1px solid #adadad;
    border-radius: 0;
    background: #e1e1e1;
    outline: 0;
  }
  .combo.mono {
    font-size: 13px;
  }
  .kind {
    flex: none;
    width: 150px;
    margin-right: 9px;
    font-size: 14px;
  }
  .focus {
    font-size: 14px;
    background: #fff;
    border: 1px solid #0078d7;
    padding: 2px 24px 2px 2px;
  }
  .focus input {
    height: 17px;
    padding: 0;
    border: 0;
    background: #f0f0f0;
  }
  .focus input::selection {
    background: #0078d7;
    color: #fff;
  }
  .combo.plain input {
    background: #fff;
    border-color: #7a7a7a;
  }
  .combo .chev {
    position: absolute;
    right: 5px;
    top: 8px;
    width: 10px;
    height: 6px;
    pointer-events: none;
  }
  .side {
    width: 168px;
    padding-right: 9px;
    text-align: right;
  }
  .short {
    flex: none;
    width: 150px;
  }
  .dates {
    height: 27px;
  }
  .dates .lead {
    width: 138px;
    margin-right: 2px;
  }
  .dlabel {
    width: 159px;
    padding-right: 9px;
    text-align: right;
  }
  .date + .dlabel {
    width: 168px;
  }
  input[type="checkbox"] {
    appearance: none;
    width: 19px;
    height: 19px;
    border: 1px solid #888;
    background: #fff;
    display: grid;
    place-items: center;
  }
  input[type="checkbox"]:checked::before {
    content: "";
    width: 5px;
    height: 9px;
    border: solid #000;
    border-width: 0 2px 2px 0;
    transform: rotate(40deg);
  }
  #opt {
    margin-left: 4px;
  }
  .date {
    display: flex;
    align-items: center;
    width: 150px;
    height: 25px;
    border: 1px solid #7a7a7a;
    font-size: 13px;
  }
  .date input {
    flex: 1;
    min-width: 0;
    border: 0;
    padding: 0 2px;
    background: none;
  }
  .date svg {
    width: 28px;
    height: 18px;
    margin-right: 5px;
  }
  .progress {
    height: 25px;
    margin-top: 7px;
    background: #e6e6e6;
    border: 1px solid #bcbcbc;
  }
  .actions {
    width: 188px;
    display: flex;
    flex-direction: column;
    gap: 5px;
  }
  .actions button {
    height: 29px;
    background: #f0f0f0;
    border: 1px solid #a0a0a0;
    line-height: 27px;
  }
  .actions .start {
    margin-top: 11px;
    font-weight: 700;
  }

  .status {
    height: 29px;
    flex: none;
    display: grid;
    grid-template-columns: 1fr 156px 144px 98px 98px 94px 96px 91px 196px;
    position: relative;
    border-top: 1px solid #a0a0a0;
  }
  .status > span {
    height: 25px;
    margin-top: 3px;
    padding-left: 4px;
    line-height: 25px;
    border-left: 1px solid #a0a0a0;
  }
  .status .help {
    border: 0;
    padding: 0;
  }
  .net {
    display: flex;
    align-items: center;
    gap: 5px;
  }
  .net svg {
    width: 32px;
    height: 16px;
  }
  .size {
    position: absolute;
    right: 0;
    bottom: 0;
    width: 16px;
    height: 16px;
  }

  .taskbar {
    height: 51px;
    flex: none;
    display: flex;
    align-items: center;
    background: linear-gradient(90deg, #d4dae3, #dadbe1 16%, #e9dcda 28%, #e8dddb 36%, #d6dae1 50%, #dadbe1 66%, #e4dbdb 74%, #d9dae5 84%, #dcdce8);
    padding-right: 31px;
  }
  .win, .find {
    width: 32px;
    height: 20px;
  }
  .find {
    width: 58px;
  }
  .win svg, .find svg {
    width: 20px;
    height: 20px;
  }
  .bars {
    width: 4px;
    height: 34px;
    margin-right: 13px;
    border: solid #111;
    border-width: 0 1px;
  }
  .app {
    position: relative;
    width: 46px;
    height: 41px;
    align-self: flex-start;
    padding-top: 4px;
    border-bottom: 3px solid transparent;
    background-clip: padding-box;
  }
  .app.active {
    background: #f3eeee;
  }
  .app.run::after {
    content: "";
    position: absolute;
    left: 6px;
    right: 5px;
    bottom: -3px;
    height: 3px;
    background: #0078d7;
  }
  .app.active::after {
    left: 0;
    right: 0;
  }
  .cal {
    width: 30px;
    height: 30px;
  }
  .week {
    margin: 0 26px 0 10px;
  }
  .tray {
    width: 20px;
    height: 20px;
    margin-right: 9px;
  }
  .sogou {
    margin-left: 8px;
  }
  .time {
    width: 97px;
    margin-right: 15px;
    display: flex;
    flex-direction: column;
    align-items: center;
    line-height: 23px;
  }
  .notice {
    width: 20px;
    height: 20px;
  }
</style>
